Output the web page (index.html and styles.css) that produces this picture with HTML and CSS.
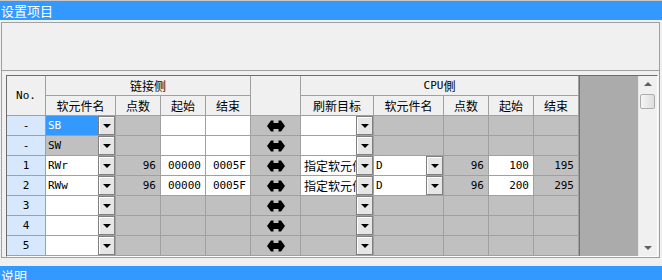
FILE: index.html
```html
<!doctype html>

<html>
  <head>
    <meta charset="utf-8">
    <title>设置项目</title>
    <link rel="stylesheet" href="styles.css">
  </head>

  <body>
    <div class="caption">设置项目</div>

    <div class="panel">
      <div class="panel-top"></div>
      <div class="panel-body">
        <div class="frame">
          <div class="grid">
            <!-- Header rows. -->
            <div class="c h no-head">No.</div>
            <div class="c h link-head">链接侧</div>
            <div class="c h arrow-head"></div>
            <div class="c h cpu-head"><span class="mono">CPU</span>側</div>
            <div class="c h">软元件名</div>
            <div class="c h">点数</div>
            <div class="c h">起始</div>
            <div class="c h">结束</div>
            <div class="c h">刷新目标</div>
            <div class="c h">软元件名</div>
            <div class="c h">点数</div>
            <div class="c h">起始</div>
            <div class="c h">结束</div>

            <!-- SB -->
            <div class="c no">-</div>
            <div class="c combo w"><span class="val sel">SB</span><span class="drop"></span></div>
            <div class="c g"></div>
            <div class="c w"></div>
            <div class="c w"></div>
            <div class="c g arrow"><svg width="18" height="12" viewBox="0 0 18 12"><path d="M0 6 L4 0.5 L6.5 0.5 L6.5 3 L11.5 3 L11.5 0.5 L14 0.5 L18 6 L14 11.5 L11.5 11.5 L11.5 9 L6.5 9 L6.5 11.5 L4 11.5 Z"/></svg></div>
            <div class="c combo w"><span class="val"></span><span class="drop"></span></div>
            <div class="c g"></div>
            <div class="c g"></div>
            <div class="c g"></div>
            <div class="c g"></div>

            <!-- SW -->
            <div class="c no">-</div>
            <div class="c combo g"><span class="val">SW</span><span class="drop"></span></div>
            <div class="c g"></div>
            <div class="c w"></div>
            <div class="c w"></div>
            <div class="c g arrow"><svg width="18" height="12" viewBox="0 0 18 12"><path d="M0 6 L4 0.5 L6.5 0.5 L6.5 3 L11.5 3 L11.5 0.5 L14 0.5 L18 6 L14 11.5 L11.5 11.5 L11.5 9 L6.5 9 L6.5 11.5 L4 11.5 Z"/></svg></div>
            <div class="c combo w"><span class="val"></span><span class="drop"></span></div>
            <div class="c g"></div>
            <div class="c g"></div>
            <div class="c g"></div>
            <div class="c g"></div>

            <!-- 1 -->
            <div class="c no">1</div>
            <div class="c combo w"><span class="val">RWr</span><span class="drop"></span></div>
            <div class="c g num">96</div>
            <div class="c w num">00000</div>
            <div class="c w num">0005F</div>
            <div class="c g arrow"><svg width="18" height="12" viewBox="0 0 18 12"><path d="M0 6 L4 0.5 L6.5 0.5 L6.5 3 L11.5 3 L11.5 0.5 L14 0.5 L18 6 L14 11.5 L11.5 11.5 L11.5 9 L6.5 9 L6.5 11.5 L4 11.5 Z"/></svg></div>
            <div class="c combo w"><span class="val cjk">指定软元件</span><span class="drop"></span></div>
            <div class="c combo w"><span class="val">D</span><span class="drop"></span></div>
            <div class="c g num">96</div>
            <div class="c w num">100</div>
            <div class="c g num">195</div>

            <!-- 2 -->
            <div class="c no">2</div>
            <div class="c combo w"><span class="val">RWw</span><span class="drop"></span></div>
            <div class="c g num">96</div>
            <div class="c w num">00000</div>
            <div class="c w num">0005F</div>
            <div class="c g arrow"><svg width="18" height="12" viewBox="0 0 18 12"><path d="M0 6 L4 0.5 L6.5 0.5 L6.5 3 L11.5 3 L11.5 0.5 L14 0.5 L18 6 L14 11.5 L11.5 11.5 L11.5 9 L6.5 9 L6.5 11.5 L4 11.5 Z"/></svg></div>
            <div class="c combo w"><span class="val cjk">指定软元件</span><span class="drop"></span></div>
            <div class="c combo w"><span class="val">D</span><span class="drop"></span></div>
            <div class="c g num">96</div>
            <div class="c w num">200</div>
            <div class="c g num">295</div>

            <!-- 3 -->
            <div class="c no">3</div>
            <div class="c combo w"><span class="val"></span><span class="drop"></span></div>
            <div class="c g"></div>
            <div class="c g"></div>
            <div class="c g"></div>
            <div class="c g arrow"><svg width="18" height="12" viewBox="0 0 18 12"><path d="M0 6 L4 0.5 L6.5 0.5 L6.5 3 L11.5 3 L11.5 0.5 L14 0.5 L18 6 L14 11.5 L11.5 11.5 L11.5 9 L6.5 9 L6.5 11.5 L4 11.5 Z"/></svg></div>
            <div class="c combo g"><span class="val"></span><span class="drop"></span></div>
            <div class="c g"></div>
            <div class="c g"></div>
            <div class="c g"></div>
            <div class="c g"></div>

            <!-- 4 -->
            <div class="c no">4</div>
            <div class="c combo w"><span class="val"></span><span class="drop"></span></div>
            <div class="c g"></div>
            <div class="c g"></div>
            <div class="c g"></div>
            <div class="c g arrow"><svg width="18" height="12" viewBox="0 0 18 12"><path d="M0 6 L4 0.5 L6.5 0.5 L6.5 3 L11.5 3 L11.5 0.5 L14 0.5 L18 6 L14 11.5 L11.5 11.5 L11.5 9 L6.5 9 L6.5 11.5 L4 11.5 Z"/></svg></div>
            <div class="c combo g"><span class="val"></span><span class="drop"></span></div>
            <div class="c g"></div>
            <div class="c g"></div>
            <div class="c g"></div>
            <div class="c g"></div>

            <!-- 5 -->
            <div class="c no">5</div>
            <div class="c combo w"><span class="val"></span><span class="drop"></span></div>
            <div class="c g"></div>
            <div class="c g"></div>
            <div class="c g"></div>
            <div class="c g arrow"><svg width="18" height="12" viewBox="0 0 18 12"><path d="M0 6 L4 0.5 L6.5 0.5 L6.5 3 L11.5 3 L11.5 0.5 L14 0.5 L18 6 L14 11.5 L11.5 11.5 L11.5 9 L6.5 9 L6.5 11.5 L4 11.5 Z"/></svg></div>
            <div class="c combo g"><span class="val"></span><span class="drop"></span></div>
            <div class="c g"></div>
            <div class="c g"></div>
            <div class="c g"></div>
            <div class="c g"></div>
          </div>

          <div class="rest"></div>

          <div class="vscroll">
            <div class="sb-btn up"></div>
            <div class="sb-thumb"></div>
            <div class="sb-track"></div>
            <div class="sb-btn down"></div>
          </div>
        </div>
      </div>
    </div>

    <div class="caption section">说明</div>
  </body>
</html>
```

FILE: styles.css
```css
* { margin: 0; padding: 0; box-sizing: border-box; }
html, body {
  overflow: hidden;
  width: 100%;
  height: 100%;
  background: #f0f0f0;
  font-family: "Liberation Sans", "Noto Sans CJK SC", sans-serif;
}
body {
  border-top: 1px solid #c8c8c8;
}

.caption {
  height: 19px;
  padding-left: 1px;
  background: #3399ff;
  color: white;
  font-family: "Noto Sans CJK SC", sans-serif;
  font-size: 13px;
  line-height: 19px;
}
.caption.section {
  margin-top: 8px;
}

.panel {
  margin: 2px 2px 0 1px;
  border: 1px solid #a0a0a0;
}
.panel-top {
  height: 48px;
  border-bottom: 1px solid #a0a0a0;
}
.panel-body {
  padding: 4px 1px 0 4px;
}

.frame {
  display: flex;
  border: 1px solid;
  border-color: #6d6d6d #fdfdfd #fdfdfd #6d6d6d;
}

.grid {
  display: grid;
  grid-template-columns: 39px 70px 45px 45px 45px 50px 73px 70px 45px 45px 45px;
  grid-auto-rows: 20px;
  width: 572px;
  font-family: "DejaVu Sans Mono", monospace;
  font-size: 11px;
  color: #000;
}
.c {
  display: flex;
  align-items: center;
  overflow: hidden;
  white-space: nowrap;
  border-right: 1px solid #a0a0a0;
  border-bottom: 1px solid #a0a0a0;
}
.h {
  justify-content: center;
  background: #f0f0f0;
  font-family: "Noto Sans CJK SC", sans-serif;
  font-size: 12px;
}
.h .mono { font-family: "DejaVu Sans Mono", monospace; font-size: 11px; }
.no-head {
  grid-row: span 2;
  font-family: "DejaVu Sans Mono", monospace;
  font-size: 11px;
}
.link-head { grid-column: span 4; }
.arrow-head { grid-row: span 2; }
.cpu-head { grid-column: span 5; }

.no {
  justify-content: center;
  background: #d7e7fc;
}
.w { background: #fff; }
.g { background: #c0c0c0; }
.num {
  justify-content: flex-end;
  padding-right: 4px;
}
.arrow { justify-content: center; }
.arrow svg { display: block; }

.combo { align-items: stretch; }
.combo .val {
  flex: 1;
  min-width: 0;
  overflow: hidden;
  padding-left: 2px;
  line-height: 19px;
}
.combo .val.cjk {
  padding-left: 3px;
  font-family: "Noto Sans CJK SC", sans-serif;
  font-size: 12px;
}
.combo .val.sel {
  background: #3399ff;
  color: white;
}
.drop {
  position: relative;
  flex: none;
  width: 17px;
  background: #e6e6e6;
  border: 1px solid #808080;
  box-shadow: inset 1px 1px #fff;
}
.drop:after {
  content: "";
  position: absolute;
  left: 4px; top: 7px;
  border-left: 4px solid transparent;
  border-right: 4px solid transparent;
  border-top: 4px solid #000;
}

.rest {
  width: 59px;
  background: #ababab;
  border-left: 1px solid #707070;
}

.vscroll {
  display: flex;
  flex-direction: column;
  width: 18px;
  background: #f0f0f0;
  border-left: 1px solid #e8e8e8;
}
.sb-btn {
  position: relative;
  height: 17px;
}
.sb-btn:after {
  content: "";
  position: absolute;
  left: 5px;
  border-left: 4px solid transparent;
  border-right: 4px solid transparent;
}
.sb-btn.up:after { top: 6px; border-bottom: 4px solid #606060; }
.sb-btn.down:after { top: 7px; border-top: 4px solid #606060; }
.sb-thumb {
  height: 15px;
  margin: 1px 1px 0;
  border: 1px solid #adadad;
  border-radius: 2px;
  background: linear-gradient(to right, #f5f5f5, #dedede);
}
.sb-track { flex: 1; }
```
